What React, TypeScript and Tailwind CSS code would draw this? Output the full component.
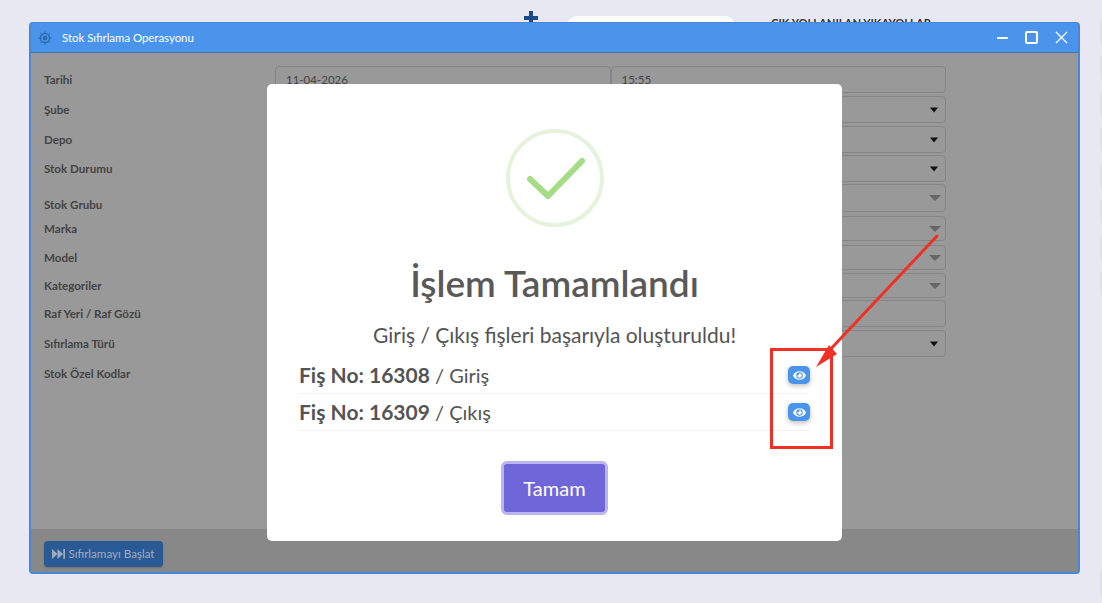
import React from 'react';
import { FaEye } from 'react-icons/fa';

const font = { fontFamily: 'Lato, "Noto Sans", sans-serif' };

interface FormRow {
  label: string;
  rowClass: string;
  labelClass?: string;
  arrow?: 'dark' | 'light';
}

const rows: FormRow[] = [
  { label: 'Şube', rowClass: 'mt-[3px] h-[27px]', arrow: 'dark' },
  { label: 'Depo', rowClass: 'mt-[3px] h-[27px]', arrow: 'dark' },
  { label: 'Stok Durumu', rowClass: 'mt-[2px] h-[27px]', arrow: 'dark' },
  { label: 'Stok Grubu', rowClass: 'mt-[2px] h-[28px]', labelClass: 'pt-[14px]', arrow: 'light' },
  { label: 'Marka', rowClass: 'mt-[4px] h-[25px]', arrow: 'light' },
  { label: 'Model', rowClass: 'mt-[4px] h-[25px]', arrow: 'light' },
  { label: 'Kategoriler', rowClass: 'mt-[3px] h-[25px]', arrow: 'light' },
  { label: 'Raf Yeri / Raf Gözü', rowClass: 'mt-[2px] h-[27px]' },
  { label: 'Sıfırlama Türü', rowClass: 'mt-[3px] h-[27px]', arrow: 'dark' },
];

const Arrow: React.FC<{ kind: 'dark' | 'light' }> = ({ kind }) =>
  kind === 'dark' ? (
    <span className="absolute right-[7px] top-1/2 -translate-y-1/2 border-x-[4px] border-t-[5px] border-x-transparent border-t-[#111]" />
  ) : (
    <span className="absolute right-[4px] top-1/2 -translate-y-1/2 border-x-[6px] border-t-[6px] border-x-transparent border-t-[#666]" />
  );

const Receipt: React.FC<{ no: string; kind: string }> = ({ no, kind }) => (
  <div className="flex h-[37px] items-center justify-between border-b border-[#f1f1f1] text-[20px] text-[#545454]">
    <div>
      <b className="text-[21px] font-bold">Fiş No: {no}</b> / {kind}
    </div>
    <button className="flex h-[18px] w-[22px] items-center justify-center rounded-[5px] bg-[#4a94ec] text-white shadow-[0_2px_5px_rgba(0,0,0,0.25)]">
      <FaEye size={13} />
    </button>
  </div>
);

export default function App() {
  return (
    <div className="relative h-[603px] w-[1102px] overflow-hidden bg-[#e7e8f2]" style={font}>
      {/* page behind the window */}
      <svg className="absolute left-[524px] top-[11px]" width="14" height="14" viewBox="0 0 14 14" fill="#1e4a8c">
        <path d="M5 0h4v5h5v4H9v5H5V9H0V5h5z" />
      </svg>
      <div className="absolute left-[567px] top-[16px] h-[20px] w-[168px] rounded-full bg-white" />
      <div className="absolute left-[771px] top-[15px] text-[11.200px] font-bold text-[#333]">ÇIK YOLLANILAN YIKAYOLLAR</div>
      <div className="absolute left-[1100px] top-[19px] flex flex-col gap-[11px]">
        {[0, 1, 2, 3, 4, 5, 6, 7].map(i => (
          <div key={i} className="h-[25px] w-[20px] rounded-[4px] bg-[#dfdfe5]" />
        ))}
      </div>
      <div className="absolute left-[1100px] top-[569px] h-[27px] w-[20px] rounded-[4px] bg-[#dfdfe5]" />

      {/* window */}
      <div className="absolute left-[29px] top-[22px] flex h-[552px] w-[1051px] flex-col overflow-hidden rounded-[4px] border-x-2 border-b-2 border-t border-[#4a86d8] bg-[#999]">
        <div className="flex h-[30px] shrink-0 items-center border-b border-[#3f74ba] bg-[#4a94ec] pl-[7px] pr-[10px]">
          <svg width="14" height="14" viewBox="0 0 14 14" fill="none" stroke="#2d6cb5" strokeWidth="1.500">
            <circle cx="7" cy="7" r="4.600" />
            <circle cx="7" cy="7" r="1.600" fill="#2d6cb5" />
            <path d="M7 0v3M7 11v3M0 7h3M11 7h3M2 2l2 2M10 10l2 2M12 2l-2 2M4 10l-2 2" strokeWidth="1" />
          </svg>
          <span className="ml-[10px] text-[11.400px] text-white">Stok Sıfırlama Operasyonu</span>
          <div className="ml-auto flex items-center gap-[17px]">
            <span className="h-[2px] w-[11px] rounded bg-white" />
            <span className="h-[13px] w-[13px] rounded-[2px] border-2 border-white" />
            <svg width="13" height="13" viewBox="0 0 13 13" stroke="#fff" strokeWidth="1.300">
              <path d="M1 1l11 11M12 1L1 12" />
            </svg>
          </div>
        </div>

        <div className="flex-1 pl-[13px] pt-[13px] pr-[132px]">
          <div className="flex h-[27px]">
            <div className="flex w-[231px] items-center text-[11.600px] font-bold text-[#444]">Tarihi</div>
            <div className="flex flex-1">
              <div className="flex flex-1 items-center rounded-[4px] border border-[#858585] pl-[10px] text-[11.500px] text-[#444]">11-04-2026</div>
              <div className="flex flex-1 items-center rounded-[4px] border border-[#858585] pl-[10px] text-[11.500px] text-[#444]">15:55</div>
            </div>
          </div>
          {rows.map(row => (
            <div key={row.label} className={`flex ${row.rowClass}`}>
              <div className={`flex w-[231px] items-center text-[11.600px] font-bold text-[#444] ${row.labelClass ?? ''}`}>{row.label}</div>
              <div className="relative flex-1 rounded-[4px] border border-[#858585]">
                {row.arrow && <Arrow kind={row.arrow} />}
              </div>
            </div>
          ))}
          <div className="mt-[3px] flex h-[27px] items-center text-[11.600px] font-bold text-[#444]">Stok Özel Kodlar</div>
        </div>

        <div className="flex h-[43px] shrink-0 items-end border-t border-[#858585] bg-[#888] pb-[5px] pl-[13px]">
          <button className="flex h-[26px] w-[119px] items-center justify-center gap-[3px] rounded-[4px] bg-[#2a5a94] text-[11.600px] text-[#a0acc0] shadow-[0_1px_2px_rgba(0,0,0,0.2)]">
            <svg width="13" height="10" viewBox="0 0 13 10" fill="#a0acc0">
              <path d="M0 0l5.500 5L0 10zM5.500 0L11 5l-5.500 5zM11.300 0H13v10h-1.700z" />
            </svg>
            Sıfırlamayı Başlat
          </button>
        </div>
      </div>

      {/* result dialog */}
      <div className="absolute left-[267px] top-[84px] flex h-[457px] w-[575px] flex-col items-center rounded-[5px] bg-white pt-[45px]">
        <svg width="98" height="98" viewBox="0 0 98 98" fill="none">
          <circle cx="49" cy="49" r="47" stroke="#e6f3dc" strokeWidth="4" />
          <path d="M24 50l18 17 34-35" stroke="#a5dc86" strokeWidth="6" strokeLinecap="round" strokeLinejoin="round" />
        </svg>
        <div className="mt-[31px] text-[37px] font-semibold leading-[50px] text-[#595959]">İşlem Tamamlandı</div>
        <div className="mt-[13px] text-[21px] leading-[28px] text-[#545454]">Giriş / Çıkış fişleri başarıyla oluşturuldu!</div>
        <div className="mt-[8px] w-full px-[32px]">
          <Receipt no="16308" kind="Giriş" />
          <Receipt no="16309" kind="Çıkış" />
        </div>
        <button className="mt-[30px] flex h-[54px] w-[107px] items-center justify-center rounded-[6px] border-[3px] border-[#b9b5ef] bg-[#6e66d9] text-[20px] text-white">
          Tamam
        </button>
      </div>

      {/* annotation */}
      <svg className="pointer-events-none absolute left-0 top-0" width="1102" height="603" fill="none">
        <rect x="771.500" y="349.500" width="60" height="98" stroke="#ee3124" strokeWidth="3" />
        <path d="M937 236L827 353" stroke="#ee3124" strokeWidth="3" strokeLinecap="round" />
        <path d="M816 367L829 345L837 354Z" fill="#ee3124" />
      </svg>
    </div>
  );
}
